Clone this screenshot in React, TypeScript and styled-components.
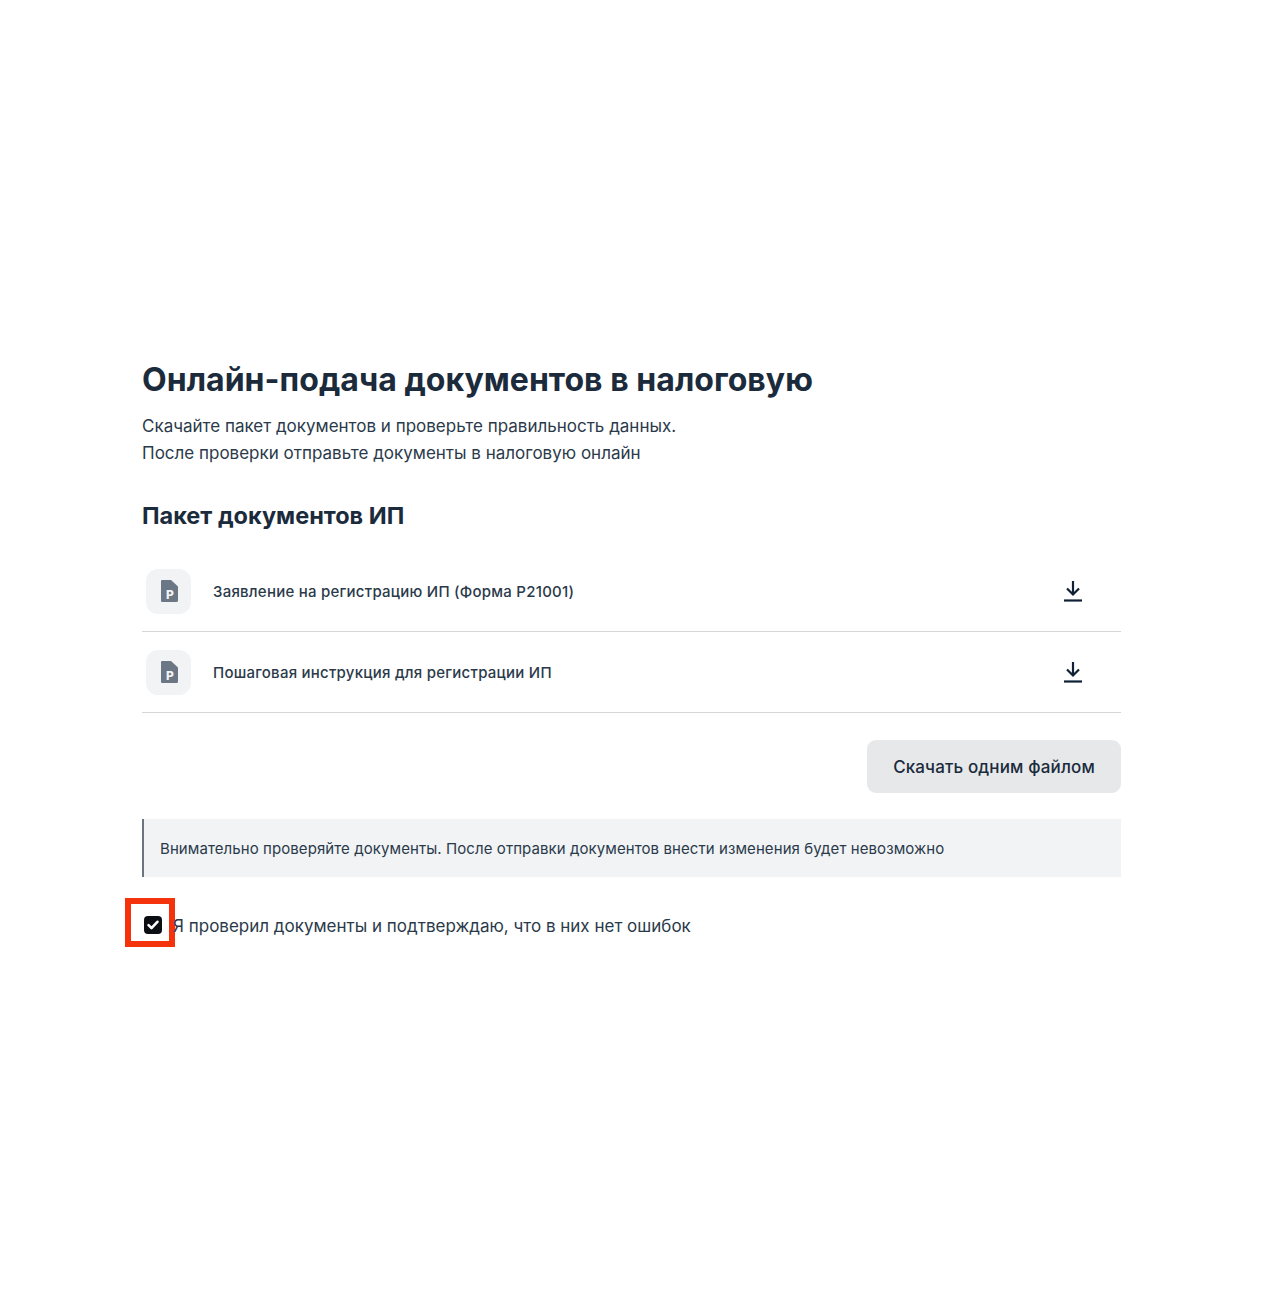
import React from "react";
import styled, { createGlobalStyle } from "styled-components";

const GlobalStyle = createGlobalStyle`
  html, body {
    margin: 0;
    padding: 0;
    background: #fff;
  }
  body {
    font-family: Inter, "Noto Sans", sans-serif;
    color: #1b2b3c;
  }
`;

const Page = styled.div`
  width: 1280px;
  height: 1300px;
  box-sizing: border-box;
  padding: 360px 159px 0 142px;
`;

const Title = styled.h1`
  margin: 0;
  font-size: 32px;
  line-height: 40px;
  font-weight: 700;
  letter-spacing: 0.04px;
  color: #1b2b3c;
`;

const Lead = styled.p`
  margin: 13px 0 0;
  font-size: 17px;
  line-height: 27px;
  color: #2b3a4a;
`;

const Subtitle = styled.h2`
  margin: 33px 0 0;
  font-size: 23.5px;
  line-height: 32px;
  font-weight: 700;
  color: #1b2b3c;
`;

const DocList = styled.div`
  margin-top: 19px;
`;

const DocRow = styled.div`
  display: flex;
  align-items: center;
  height: 81px;
  box-sizing: border-box;
  padding: 0 36px 0 4px;
  border-bottom: 1px solid #d4d7da;
`;

const DocBadge = styled.div`
  width: 45px;
  height: 45px;
  border-radius: 12px;
  background: #f1f3f5;
  display: flex;
  align-items: center;
  justify-content: center;
  flex-shrink: 0;
`;

const DocName = styled.span`
  margin-left: 22px;
  padding-top: 2px;
  flex: 1;
  font-size: 15px;
  line-height: 20px;
  font-weight: 500;
  letter-spacing: 0.24px;
  color: #2b3a4a;
`;

const DownloadButton = styled.button`
  width: 24px;
  height: 24px;
  padding: 0;
  border: 0;
  background: none;
  display: flex;
  align-items: center;
  justify-content: center;
`;

const Actions = styled.div`
  display: flex;
  justify-content: flex-end;
  margin-top: 27px;
`;

const BundleButton = styled.button`
  height: 53px;
  width: 254px;
  border: 0;
  border-radius: 9px;
  background: #e6e8ea;
  font-family: inherit;
  font-size: 17px;
  font-weight: 500;
  letter-spacing: 0.13px;
  color: #1b2b3c;
`;

const Notice = styled.div`
  margin-top: 26px;
  height: 58px;
  box-sizing: border-box;
  display: flex;
  align-items: center;
  padding-left: 16px;
  background: #f1f3f5;
  border-left: 2px solid #6b7580;
  font-size: 15px;
  letter-spacing: 0.08px;
  color: #2b3a4a;
`;

const ConfirmRow = styled.label`
  display: flex;
  align-items: center;
  margin-top: 37px;
  padding-left: 2px;
  font-size: 17px;
  line-height: 24px;
  color: #2b3a4a;
`;

const ConfirmText = styled.span`
  position: relative;
`;

const CheckMark = styled.span`
  position: relative;
  width: 18px;
  height: 18px;
  margin: 0 11px 2px 0;
  border-radius: 4px;
  background: #0b0f14;
  display: flex;
  align-items: center;
  justify-content: center;
  flex-shrink: 0;
`;

const Highlight = styled.span`
  position: absolute;
  left: -19px;
  top: -18px;
  width: 50px;
  height: 49px;
  box-sizing: border-box;
  border: 6px solid #f4320b;
`;

const FileIcon = () => (
  <svg width="20" height="24" viewBox="0 0 20 24">
    <path
      d="M3 1h9l7 6.5V21.5a1.5 1.5 0 0 1-1.5 1.5H3a1 1 0 0 1-1-1V2a1 1 0 0 1 1-1z"
      fill="#6b7785"
    />
    <text
      x="11"
      y="20"
      textAnchor="middle"
      fontFamily="Inter, sans-serif"
      fontSize="12"
      fontWeight="800"
      fill="#f1f3f5"
    >
      P
    </text>
  </svg>
);

const DownloadIcon = () => (
  <svg width="20" height="22" viewBox="0 0 20 22" fill="none" stroke="#0f2136" strokeWidth="2.2">
    <path d="M10 1v13.5M4 8.5l6 6 6-6" />
    <path d="M1 20.5h18" />
  </svg>
);

const docs = [
  "Заявление на регистрацию ИП (Форма Р21001)",
  "Пошаговая инструкция для регистрации ИП",
];

const App: React.FC = () => {
  return (
    <Page>
      <GlobalStyle />
      <Title>Онлайн-подача документов в налоговую</Title>
      <Lead>
        Скачайте пакет документов и проверьте правильность данных.
        <br />
        После проверки отправьте документы в налоговую онлайн
      </Lead>
      <Subtitle>Пакет документов ИП</Subtitle>
      <DocList>
        {docs.map((doc) => (
          <DocRow key={doc}>
            <DocBadge>
              <FileIcon />
            </DocBadge>
            <DocName>{doc}</DocName>
            <DownloadButton>
              <DownloadIcon />
            </DownloadButton>
          </DocRow>
        ))}
      </DocList>
      <Actions>
        <BundleButton>Скачать одним файлом</BundleButton>
      </Actions>
      <Notice>
        Внимательно проверяйте документы. После отправки документов внести изменения будет невозможно
      </Notice>
      <ConfirmRow>
        <CheckMark>
          <Highlight />
          <svg width="12" height="10" viewBox="0 0 12 10" fill="none" stroke="#fff" strokeWidth="2.6" strokeLinecap="round" strokeLinejoin="round">
            <path d="M1.6 5.2l2.9 2.9L10.4 1.8" />
          </svg>
        </CheckMark>
        <ConfirmText>Я проверил документы и подтверждаю, что в них нет ошибок</ConfirmText>
      </ConfirmRow>
    </Page>
  );
};

export default App;
